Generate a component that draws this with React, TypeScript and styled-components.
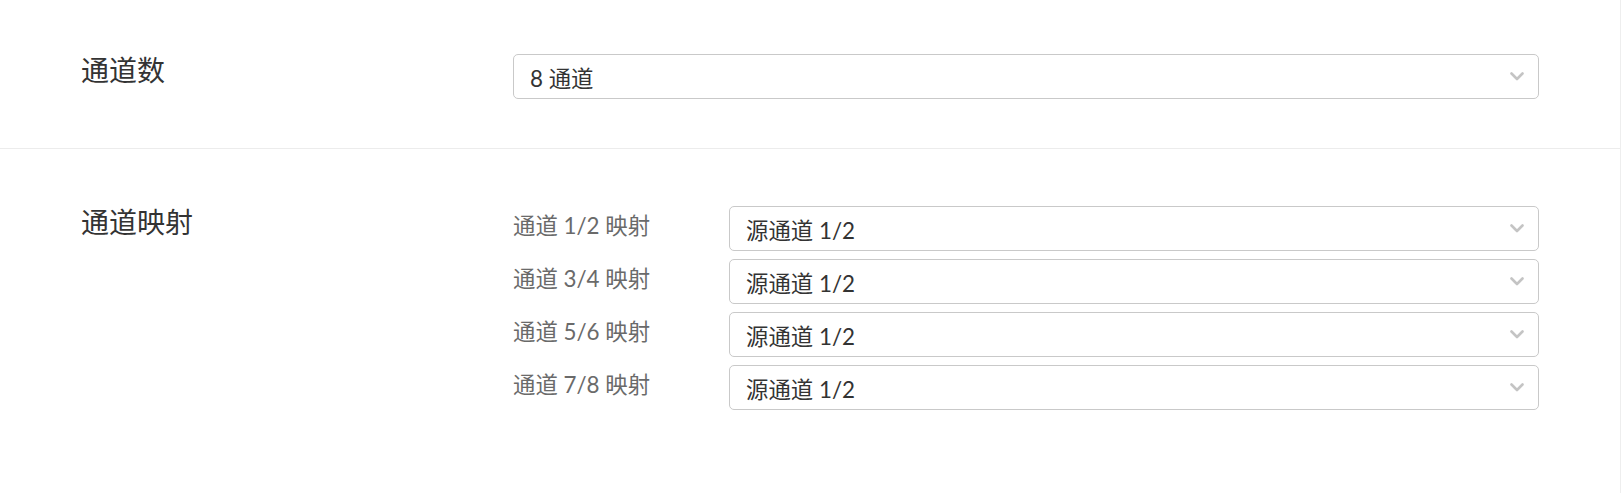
import React from "react";
import styled, { createGlobalStyle } from "styled-components";

const GlobalStyle = createGlobalStyle`
  html, body {
    margin: 0;
    padding: 0;
    background: #ffffff;
  }
  body {
    font-family: Lato, "Noto Sans CJK SC", "Noto Sans", sans-serif;
    color: #333333;
  }
`;

const Page = styled.div`
  width: 1621px;
  min-height: 493px;
  box-sizing: border-box;
  border-right: 1px solid #eeeeee;
  background: #ffffff;
`;

const Section = styled.section<{ $top: number; $bottom: number; $divider?: boolean }>`
  display: flex;
  align-items: flex-start;
  padding: ${(p) => p.$top}px 81px ${(p) => p.$bottom}px 81px;
  border-bottom: ${(p) => (p.$divider ? "1px solid #ececec" : "none")};
  background: #ffffff;
`;

const Heading = styled.h3`
  width: 432px;
  flex: none;
  margin: 0;
  font-size: 28px;
  font-weight: 400;
  line-height: 32px;
  color: #333333;
`;

const Content = styled.div`
  flex: 1;
  min-width: 0;
  display: flex;
  flex-direction: column;
  gap: 8px;
`;

const MapRow = styled.div`
  display: flex;
  align-items: flex-start;
`;

const SubLabel = styled.div`
  width: 216px;
  flex: none;
  font-size: 22.4px;
  line-height: 40px;
  color: #6a6a6a;
`;

const SelectBox = styled.div`
  flex: 1 1 auto;
  min-width: 0;
  height: 45px;
  box-sizing: border-box;
  border: 1px solid #c9c9c9;
  border-radius: 5px;
  background: #ffffff;
  display: flex;
  align-items: center;
  justify-content: space-between;
  padding: 0 14px 0 16px;
  font-size: 22.4px;
  color: #333333;
`;

const Chevron = styled.svg`
  width: 14px;
  height: 9px;
  flex: none;
`;

const Select: React.FC<{ value: string }> = ({ value }) => (
  <SelectBox>
    <span>{value}</span>
    <Chevron viewBox="0 0 14 9">
      <polyline points="1.5,1.5 7,7 12.5,1.5" fill="none" stroke="#c4c4c4" strokeWidth="2.6" strokeLinecap="round" strokeLinejoin="round" />
    </Chevron>
  </SelectBox>
);

const mappings = ["1/2", "3/4", "5/6", "7/8"];

export default function App() {
  return (
    <>
      <GlobalStyle />
      <Page>
        <Section $top={54} $bottom={49} $divider>
          <Heading>通道数</Heading>
          <Content>
            <Select value="8 通道" />
          </Content>
        </Section>
        <Section $top={57} $bottom={84}>
          <Heading>通道映射</Heading>
          <Content>
            {mappings.map((m) => (
              <MapRow key={m}>
                <SubLabel>通道 {m} 映射</SubLabel>
                <Select value="源通道 1/2" />
              </MapRow>
            ))}
          </Content>
        </Section>
      </Page>
    </>
  );
}
